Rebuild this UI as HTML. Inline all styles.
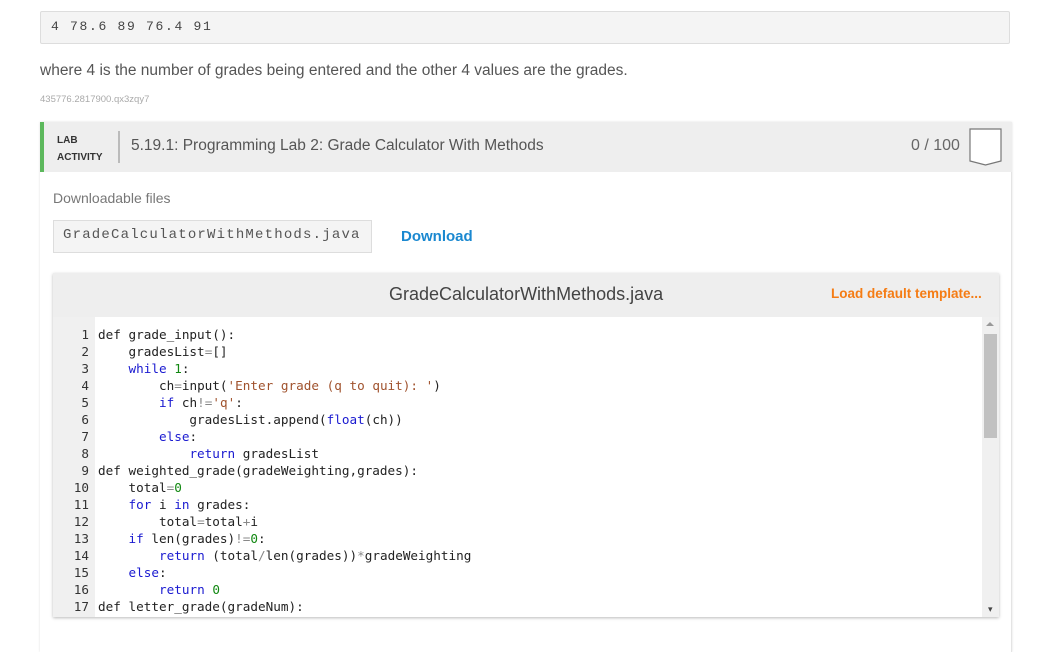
<!DOCTYPE html>
<html><head><style>
body{margin:0;width:1040px;height:638px;overflow:hidden;background:#fff;font-family:"Liberation Sans",sans-serif;position:relative}
.a{position:absolute}
pre{margin:0}
.code{font-family:"DejaVu Sans Mono","Liberation Mono",monospace;font-size:12.66px;line-height:17px;color:#222;white-space:pre}
.k{color:#1a1ad0}.s{color:#a0522d}.n{color:#118811}.o{color:#888}
</style></head><body>
<div class="a" style="left:40px;top:11px;width:968px;height:31px;background:#f4f4f4;border:1px solid #ddd;border-radius:2px"></div>
<div class="a" style="left:51px;top:19px;font-family:'Liberation Mono',monospace;font-size:13px;letter-spacing:1.7px;color:#444">4 78.6 89 76.4 91</div>
<div class="a" style="left:40px;top:62px;font-size:15.5px;color:#555">where 4 is the number of grades being entered and the other 4 values are the grades.</div>
<div class="a" style="left:40px;top:94px;font-size:9.5px;color:#aaa">435776.2817900.qx3zqy7</div>

<div class="a" style="left:40px;top:122px;width:971px;height:530px;border-right:1px solid #e4e4e4;box-shadow:0 0 2px #ddd"></div>
<div class="a" style="left:40px;top:122px;width:972px;height:50px;background:#eee;border-left:4px solid #5cb85c;box-sizing:border-box"></div>
<div class="a" style="left:57px;top:132px;font-size:10px;font-weight:bold;color:#333;line-height:17px">LAB<br>ACTIVITY</div>
<div class="a" style="left:118px;top:131px;width:2px;height:32px;background:#bbb"></div>
<div class="a" style="left:131px;top:137px;font-size:15.5px;color:#555">5.19.1: Programming Lab 2: Grade Calculator With Methods</div>
<div class="a" style="left:911px;top:137px;font-size:16px;color:#666">0 / 100</div>
<svg class="a" style="left:969px;top:128px" width="34" height="38"><path d="M1 1H32V33L16.5 37L1 33Z" fill="#fff" stroke="#777" stroke-width="1.2"/></svg>

<div class="a" style="left:53px;top:190px;font-size:14px;color:#777">Downloadable files</div>
<div class="a" style="left:53px;top:220px;width:317px;height:31px;background:#f4f4f4;border:1px solid #ddd"></div>
<div class="a" style="left:63px;top:227px;font-family:'Liberation Mono',monospace;font-size:14px;letter-spacing:1.2px;color:#555">GradeCalculatorWithMethods.java</div>
<div class="a" style="left:401px;top:228px;font-size:15px;font-weight:bold;color:#1a88d0">Download</div>

<div class="a" style="left:53px;top:273px;width:946px;height:344px;box-shadow:0 1px 3px #bbb;background:#fff"></div>
<div class="a" style="left:53px;top:273px;width:946px;height:44px;background:#eee"></div>
<div class="a" style="left:389px;top:284px;font-size:18px;color:#444">GradeCalculatorWithMethods.java</div>
<div class="a" style="left:831px;top:286px;font-size:13.5px;font-weight:bold;color:#f57c14">Load default template...</div>
<div class="a" style="left:53px;top:317px;width:42px;height:300px;background:#f0f0f0"></div>
<div class="a" style="left:982px;top:317px;width:17px;height:300px;background:#f0f0f0"></div>
<div class="a" style="left:984px;top:334px;width:13px;height:104px;background:#c1c1c1"></div>
<div class="a" style="left:986px;top:322px;width:0;height:0;border:4px solid transparent;border-bottom:4px solid #999;border-top:0"></div>
<div class="a" style="left:988px;top:604px;font-size:9px;color:#444">▾</div>
<pre class="a code" style="left:53px;top:326px;width:36px;text-align:right;color:#333">1
2
3
4
5
6
7
8
9
10
11
12
13
14
15
16
17</pre>
<pre class="a code" style="left:98px;top:326px">def grade_input():
    gradesList<span class="o">=</span>[]
    <span class="k">while</span> <span class="n">1</span>:
        ch<span class="o">=</span>input(<span class="s">'Enter grade (q to quit): '</span>)
        <span class="k">if</span> ch<span class="o">!=</span><span class="s">'q'</span>:
            gradesList.append(<span class="k">float</span>(ch))
        <span class="k">else</span>:
            <span class="k">return</span> gradesList
def weighted_grade(gradeWeighting,grades):
    total<span class="o">=</span><span class="n">0</span>
    <span class="k">for</span> i <span class="k">in</span> grades:
        total<span class="o">=</span>total<span class="o">+</span>i
    <span class="k">if</span> len(grades)<span class="o">!=</span><span class="n">0</span>:
        <span class="k">return</span> (total<span class="o">/</span>len(grades))<span class="o">*</span>gradeWeighting
    <span class="k">else</span>:
        <span class="k">return</span> <span class="n">0</span>
def letter_grade(gradeNum):</pre>
</body></html>
